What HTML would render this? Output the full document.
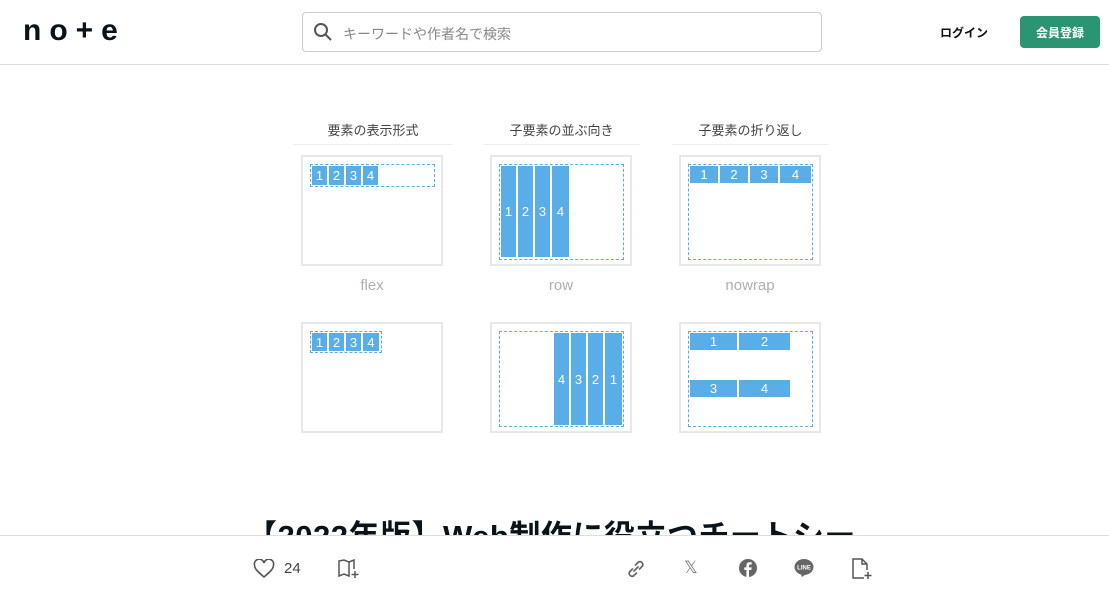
<!DOCTYPE html>
<html><head><meta charset="utf-8"><style>
*{margin:0;padding:0;box-sizing:border-box}
body{width:1109px;height:600px;overflow:hidden;background:#fff;position:relative;font-family:"Liberation Sans","Noto Sans CJK JP",sans-serif;color:#08131a}
.a{position:absolute}
.hdr{top:0;left:0;width:1109px;height:65px;border-bottom:1px solid #ddd;background:#fff}
.box{border:2px solid #e6e8ea;background:#fff;width:142px;height:111px}
.dash{border:1px dashed #5aaee8}
.c{background:#5aaee8;color:#fff;font-size:13px;display:flex;align-items:center;justify-content:center}
.h{font-size:13px;color:#444;text-align:center}
.ul{height:1px;background:#eceef0}
.lb{font-size:15px;color:#a9b0b6;text-align:center;width:142px}
</style></head><body>
<div class="a hdr">
 <div class="a" style="left:23px;top:14px;font-size:30px;font-weight:bold;letter-spacing:8px;font-family:'Liberation Sans',sans-serif">no+e</div>
 <div class="a" style="left:302px;top:12px;width:520px;height:40px;border:1px solid #ccc;border-radius:4px">
  <svg class="a" style="left:10px;top:9px" width="20" height="20" viewBox="0 0 20 20"><circle cx="8" cy="8" r="6" fill="none" stroke="#555" stroke-width="2"/><path d="M12.5 12.5L18 18" stroke="#555" stroke-width="2"/></svg>
  <div class="a" style="left:40px;top:11px;font-size:14px;color:#888">キーワードや作者名で検索</div>
 </div>
 <div class="a" style="left:940px;top:24px;font-size:12px;font-weight:bold">ログイン</div>
 <div class="a" style="left:1020px;top:16px;width:80px;height:32px;background:#2b9473;border-radius:4px;color:#fff;font-size:12px;font-weight:bold;display:flex;align-items:center;justify-content:center">会員登録</div>
</div>

<div class="a h" style="left:293px;top:120px;width:160px">要素の表示形式</div>
<div class="a h" style="left:483px;top:120px;width:157px">子要素の並ぶ向き</div>
<div class="a h" style="left:672px;top:120px;width:157px">子要素の折り返し</div>
<div class="a ul" style="left:293px;top:144px;width:160px"></div>
<div class="a ul" style="left:483px;top:144px;width:157px"></div>
<div class="a ul" style="left:672px;top:144px;width:157px"></div>

<div class="a box" style="left:301px;top:155px"></div>
<div class="a box" style="left:490px;top:155px"></div>
<div class="a box" style="left:679px;top:155px"></div>
<div class="a box" style="left:301px;top:322px"></div>
<div class="a box" style="left:490px;top:322px"></div>
<div class="a box" style="left:679px;top:322px"></div>

<div class="a lb" style="left:301px;top:277px">flex</div>
<div class="a lb" style="left:490px;top:277px">row</div>
<div class="a lb" style="left:679px;top:277px">nowrap</div>

<div class="a dash" style="left:310px;top:164px;width:125px;height:23px"></div>
<div class="a c" style="left:312px;top:166px;width:15px;height:19px">1</div>
<div class="a c" style="left:329px;top:166px;width:15px;height:19px">2</div>
<div class="a c" style="left:346px;top:166px;width:15px;height:19px">3</div>
<div class="a c" style="left:363px;top:166px;width:15px;height:19px">4</div>

<div class="a dash" style="left:499px;top:164px;width:125px;height:96px"></div>
<div class="a c" style="left:501px;top:166px;width:15px;height:91px">1</div>
<div class="a c" style="left:518px;top:166px;width:15px;height:91px">2</div>
<div class="a c" style="left:535px;top:166px;width:15px;height:91px">3</div>
<div class="a c" style="left:552px;top:166px;width:17px;height:91px">4</div>

<div class="a dash" style="left:688px;top:164px;width:125px;height:96px"></div>
<div class="a c" style="left:690px;top:166px;width:28px;height:17px">1</div>
<div class="a c" style="left:720px;top:166px;width:28px;height:17px">2</div>
<div class="a c" style="left:750px;top:166px;width:28px;height:17px">3</div>
<div class="a c" style="left:780px;top:166px;width:31px;height:17px">4</div>

<div class="a dash" style="left:310px;top:331px;width:72px;height:22px"></div>
<div class="a c" style="left:312px;top:333px;width:15px;height:18px">1</div>
<div class="a c" style="left:329px;top:333px;width:15px;height:18px">2</div>
<div class="a c" style="left:346px;top:333px;width:15px;height:18px">3</div>
<div class="a c" style="left:363px;top:333px;width:16px;height:18px">4</div>

<div class="a dash" style="left:499px;top:331px;width:125px;height:96px"></div>
<div class="a c" style="left:554px;top:333px;width:15px;height:92px">4</div>
<div class="a c" style="left:571px;top:333px;width:15px;height:92px">3</div>
<div class="a c" style="left:588px;top:333px;width:15px;height:92px">2</div>
<div class="a c" style="left:605px;top:333px;width:17px;height:92px">1</div>

<div class="a dash" style="left:688px;top:331px;width:125px;height:96px"></div>
<div class="a c" style="left:690px;top:333px;width:47px;height:17px">1</div>
<div class="a c" style="left:739px;top:333px;width:51px;height:17px">2</div>
<div class="a c" style="left:690px;top:380px;width:47px;height:17px">3</div>
<div class="a c" style="left:739px;top:380px;width:51px;height:17px">4</div>

<div class="a" style="left:246px;top:511px;font-size:31px;font-weight:bold;white-space:nowrap;letter-spacing:0.5px">【2022年版】Web制作に役立つチートシー</div>

<div class="a" style="left:0;top:535px;width:1109px;height:65px;background:#fff;border-top:1px solid #ddd">
 <svg class="a" style="left:253px;top:23px" width="22" height="20" viewBox="0 0 22 20"><path d="M11 18C4 12 1.5 9.5 1.5 6A4.5 4.5 0 0 1 11 4A4.5 4.5 0 0 1 20.5 6C20.5 9.5 18 12 11 18Z" fill="none" stroke="#555" stroke-width="1.6"/></svg>
 <div class="a" style="left:284px;top:24px;font-size:15px;color:#444">24</div>
 <svg class="a" style="left:337px;top:22px" width="24" height="22" viewBox="0 0 24 22"><path d="M2 3L7 2L12 4L12 18L7 16L2 18Z M12 4L17 2V11" fill="none" stroke="#555" stroke-width="1.5"/><path d="M18 13V20M14.5 16.5H21.5" stroke="#555" stroke-width="1.5"/></svg>
 <svg class="a" style="left:625px;top:22px" width="22" height="22" viewBox="0 0 22 22"><path d="M9 13l4-4M7.5 11l-3 3a3 3 0 0 0 4 4l3-3M14.5 11l3-3a3 3 0 0 0-4-4l-3 3" fill="none" stroke="#666" stroke-width="1.7" stroke-linecap="round"/></svg>
 <div class="a" style="left:684px;top:22px;font-size:17px;color:#777">𝕏</div>
 <svg class="a" style="left:738px;top:22px" width="20" height="20" viewBox="0 0 20 20"><circle cx="10" cy="10" r="9" fill="#666"/><path d="M11 19V12h2.3l.4-2.6H11V7.8c0-.8.3-1.3 1.3-1.3h1.4V4.2a17 17 0 0 0-2-.1c-2 0-3.3 1.2-3.3 3.4V9.4H6.3V12H8.4V19Z" fill="#fff"/></svg>
 <svg class="a" style="left:794px;top:22px" width="20" height="20" viewBox="0 0 20 20"><ellipse cx="10" cy="9" rx="9.5" ry="8" fill="#666"/><path d="M7 16l1 3 4-3z" fill="#666"/><text x="10" y="11.5" font-size="6" font-weight="bold" fill="#fff" text-anchor="middle" font-family="Liberation Sans">LINE</text></svg>
 <svg class="a" style="left:850px;top:21px" width="24" height="24" viewBox="0 0 24 24"><path d="M14 21H3V2h9l5 5v6M12 2v5h5" fill="none" stroke="#555" stroke-width="1.5"/><path d="M18 15v7M14.5 18.5h7" stroke="#555" stroke-width="1.5"/></svg>
</div>
</body></html>
